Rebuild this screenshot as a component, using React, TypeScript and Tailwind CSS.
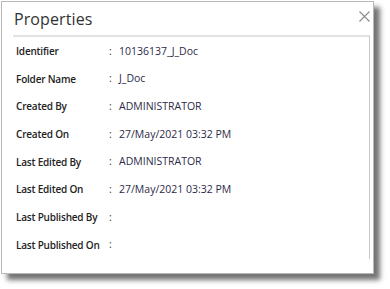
import React from "react";

const rows: [string, string][] = [
  ["Identifier", "10136137_J_Doc"],
  ["Folder Name", "J_Doc"],
  ["Created By", "ADMINISTRATOR"],
  ["Created On", "27/May/2021 03:32 PM"],
  ["Last Edited By", "ADMINISTRATOR"],
  ["Last Edited On", "27/May/2021 03:32 PM"],
  ["Last Published By", ""],
  ["Last Published On", ""],
];

export default function App() {
  return (
    <div
      className="w-[390px] h-[289px] bg-white overflow-hidden pt-[1px] pl-[1px]"
      style={{ fontFamily: '"Open Sans", "Noto Sans", sans-serif' }}
    >
      <div className="relative w-[373px] h-[273px] bg-white border border-[#b8b8b8] shadow-[6px_6px_5px_rgba(0,0,0,0.55)]">
        <div className="h-[33px] pl-[12px] flex items-center">
          <span className="text-[16px] leading-none text-[#333] tracking-[0.1px] mt-[1px]">
            Properties
          </span>
        </div>
        <button className="absolute right-[3px] top-[9px] w-[11px] h-[11px] flex items-center justify-center">
          <svg width="11" height="11" viewBox="0 0 11 11">
            <path d="M0.5 0.5L10.5 10.5M10.5 0.5L0.5 10.5" stroke="#8a8a8a" strokeWidth="1.1" fill="none" />
          </svg>
        </button>
        <div className="ml-[11px] mr-[3px] border-t-2 border-t-[#e2e2e2] border-r border-r-[#c9c9c9] pl-[3px]">
          {rows.map(([label, value]) => (
            <div key={label} className="h-[27.7px] flex items-center leading-none whitespace-nowrap">
              <span className="w-[93px] shrink-0 text-[10px] tracking-[-0.2px] font-semibold text-[#222]">{label}</span>
              <span className="w-[10px] shrink-0 text-[10.5px] text-[#333]">:</span>
              <span className="text-[10.5px] text-[#2c2a48]">{value}</span>
            </div>
          ))}
        </div>
      </div>
    </div>
  );
}
